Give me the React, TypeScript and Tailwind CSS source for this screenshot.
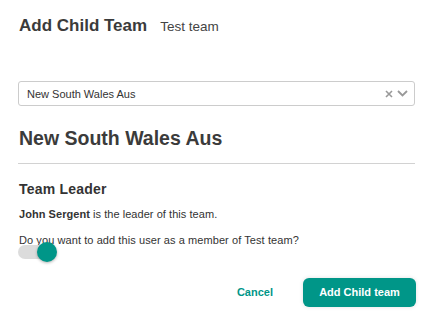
import React from 'react';

const font = { fontFamily: '"Liberation Sans", Arial, sans-serif' };

export default function App() {
  return (
    <div className="w-[435px] h-[324px] bg-white pl-[18px] pr-[20px] pt-[16px] text-[#333]" style={font}>
      {/* Header */}
      <div className="flex items-baseline gap-[13px] pl-[1px]">
        <h1 className="text-[17px] leading-[20px] font-bold text-[#3b3b3b]">Add Child Team</h1>
        <span className="text-[13.5px] leading-[20px] text-[#444]">Test team</span>
      </div>

      {/* Select */}
      <div className="mt-[44px] h-[25px] flex items-center border border-[#cccccc] rounded-[3px] pl-[8px] pr-[6px]">
        <span className="flex-1 text-[11px] leading-[14px] text-[#333]">New South Wales Aus</span>
        <svg width="8" height="8" viewBox="0 0 8 8" className="mr-[4px]">
          <path d="M1 1 L7 7 M7 1 L1 7" stroke="#999" strokeWidth="1.6" />
        </svg>
        <svg width="11" height="7" viewBox="0 0 11 7">
          <path d="M1 1 L5.5 5.5 L10 1" stroke="#999" strokeWidth="1.8" fill="none" />
        </svg>
      </div>

      <h2 className="mt-[20px] pl-[1px] text-[19.5px] leading-[24px] font-bold text-[#3b3b3b]">New South Wales Aus</h2>
      <div className="mt-[13px] h-px bg-[#d2d2d2]" />

      {/* Team leader */}
      <h3 className="mt-[16px] pl-[1px] text-[14px] leading-[18px] font-bold text-[#333] tracking-[0.2px]">Team Leader</h3>
      <p className="mt-[9px] pl-[1px] text-[11px] leading-[14px] text-[#333] tracking-[0.05px]">
        <span className="font-bold">John Sergent</span> is the leader of this team.
      </p>
      <p className="mt-[12px] pl-[1px] text-[11px] leading-[14px] text-[#333] tracking-[0.08px]">
        Do you want to add this user as a member of Test team?
      </p>

      {/* Toggle */}
      <div className="relative mt-[-5px] w-[39px] h-[20px] flex items-center">
        <div className="w-[34px] h-[14px] rounded-full bg-[#dcdcdc]" />
        <div className="absolute left-[19px] top-0 w-[20px] h-[20px] rounded-full bg-[#009688] shadow-[0_1px_3px_rgba(0,0,0,0.3)]" />
      </div>

      {/* Actions */}
      <div className="mt-[16px] flex justify-end items-center gap-[30px] mr-[-1px]">
        <button className="text-[11px] font-bold text-[#009688]">Cancel</button>
        <button className="h-[29px] w-[113px] rounded-[6px] bg-[#009688] text-white text-[11px] font-bold shadow-[0_0_4px_rgba(0,0,0,0.12)]">
          Add Child team
        </button>
      </div>
    </div>
  );
}
